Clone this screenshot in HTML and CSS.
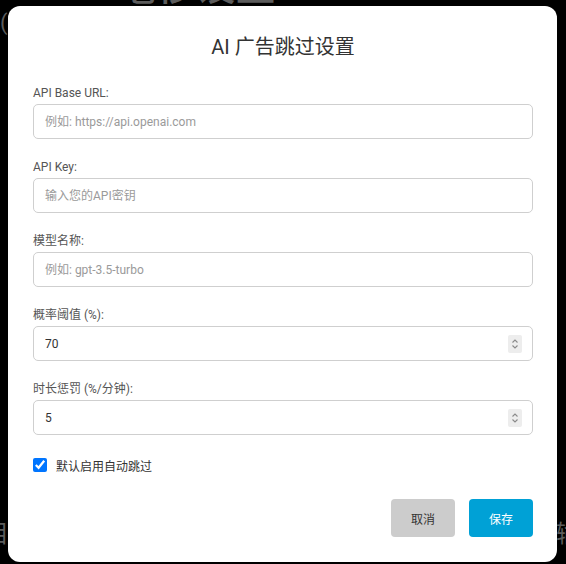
FILE: index.html
```html
<!DOCTYPE html>
<html lang="zh-CN">
<head>
<meta charset="utf-8">
<title>AI 广告跳过设置</title>
<link rel="stylesheet" href="styles.css">
</head>
<body>
<div class="bg">
  <div class="bg-head">17 毫秒设置</div>
  <div class="bg-paren">(</div>
  <div class="bg-fill"></div>
  <div class="bg-foot"><span class="bg-left">目</span><span class="bg-right">输</span></div>
</div>
<div class="overlay">
  <div class="modal">
    <h2 class="modal-title">AI 广告跳过设置</h2>
    <div class="field">
      <label class="field-label">API Base URL:</label>
      <input class="field-input" type="text" placeholder="例如: https://api.openai.com">
    </div>
    <div class="field">
      <label class="field-label">API Key:</label>
      <input class="field-input" type="text" placeholder="输入您的API密钥">
    </div>
    <div class="field">
      <label class="field-label">模型名称:</label>
      <input class="field-input" type="text" placeholder="例如: gpt-3.5-turbo">
    </div>
    <div class="field">
      <label class="field-label">概率阈值 (%):</label>
      <div class="number-box">
        <input class="number-input" type="text" value="70">
        <span class="stepper"><svg width="14" height="18" viewBox="0 0 14 18"><path d="M4.5 7.5 L7 5 L9.5 7.5" fill="none" stroke="#8a8a8a" stroke-width="1.1"/><path d="M4.5 10.5 L7 13 L9.5 10.5" fill="none" stroke="#8a8a8a" stroke-width="1.1"/></svg></span>
      </div>
    </div>
    <div class="field">
      <label class="field-label">时长惩罚 (%/分钟):</label>
      <div class="number-box">
        <input class="number-input" type="text" value="5">
        <span class="stepper"><svg width="14" height="18" viewBox="0 0 14 18"><path d="M4.5 7.5 L7 5 L9.5 7.5" fill="none" stroke="#8a8a8a" stroke-width="1.1"/><path d="M4.5 10.5 L7 13 L9.5 10.5" fill="none" stroke="#8a8a8a" stroke-width="1.1"/></svg></span>
      </div>
    </div>
    <label class="check-row">
      <input class="check-box" type="checkbox" checked>
      <span class="check-label">默认启用自动跳过</span>
    </label>
    <div class="actions">
      <button class="btn btn-cancel" type="button">取消</button>
      <button class="btn btn-save" type="button">保存</button>
    </div>
  </div>
</div>
</body>
</html>
```
FILE: styles.css
```css
html, body {
  margin: 0;
  padding: 0;
  background: #000;
  font-family: Roboto, "Noto Sans CJK SC", sans-serif;
}

.bg {
  height: 564px;
  overflow: hidden;
  display: flex;
  flex-direction: column;
  color: #5c5c5c;
}

.bg-head {
  margin-top: -33px;
  margin-left: 60px;
  font-size: 40px;
  line-height: 40px;
  font-weight: 500;
}

.bg-paren {
  margin-top: 4px;
  margin-left: 0;
  font-size: 22px;
  line-height: 24px;
}

.bg-fill {
  flex: 1;
}

.bg-foot {
  display: flex;
  justify-content: space-between;
  font-size: 24px;
  line-height: 28px;
  margin-bottom: 16px;
}

.bg-left {
  margin-left: -15px;
}

.bg-right {
  margin-right: -14px;
}

.overlay {
  position: fixed;
  inset: 0;
  display: flex;
  align-items: flex-start;
}

.modal {
  box-sizing: border-box;
  width: 549px;
  margin: 6px 0 0 8px;
  padding: 28px 24px 25px 25px;
  background: #fff;
  border-radius: 12px;
}

.modal-title {
  margin: 0 0 24px;
  font-size: 20px;
  line-height: 26px;
  font-weight: 400;
  color: #333;
  text-align: center;
}

.field {
  margin-bottom: 19px;
}

.field-label {
  display: block;
  font-size: 12px;
  line-height: 18px;
  color: #555;
  margin-bottom: 2px;
}

.field-input,
.number-box {
  box-sizing: border-box;
  display: block;
  width: 100%;
  height: 35px;
  border: 1px solid #cfcfcf;
  border-radius: 5px;
  background: #fff;
}

.field-input {
  padding: 0 11px;
  font-family: inherit;
  font-size: 12px;
  color: #333;
  outline: none;
}

.field-input::placeholder {
  color: #9a9a9a;
}

.number-box {
  display: flex;
  align-items: center;
}

.number-input {
  flex: 1;
  min-width: 0;
  border: 0;
  padding: 0 11px;
  height: 100%;
  background: transparent;
  font-family: inherit;
  font-size: 12px;
  color: #333;
  outline: none;
}

.stepper {
  display: block;
  width: 14px;
  height: 18px;
  margin-right: 10px;
  background: #ededed;
  border-radius: 2px;
}

.stepper svg {
  display: block;
}

.check-row {
  display: flex;
  align-items: center;
  height: 18px;
  margin-top: 21px;
}

.check-box {
  width: 14px;
  height: 14px;
  margin: 0 9px 0 0;
}

.check-label {
  font-size: 12px;
  color: #333;
}

.actions {
  display: flex;
  justify-content: flex-end;
  gap: 14px;
  margin-top: 25px;
}

.btn {
  width: 64px;
  height: 38px;
  border: 0;
  border-radius: 4px;
  font-family: inherit;
  font-size: 12px;
  padding: 0;
}

.btn-cancel {
  background: #cccccc;
  color: #333;
}

.btn-save {
  background: #00a1d6;
  color: #fff;
}
```
